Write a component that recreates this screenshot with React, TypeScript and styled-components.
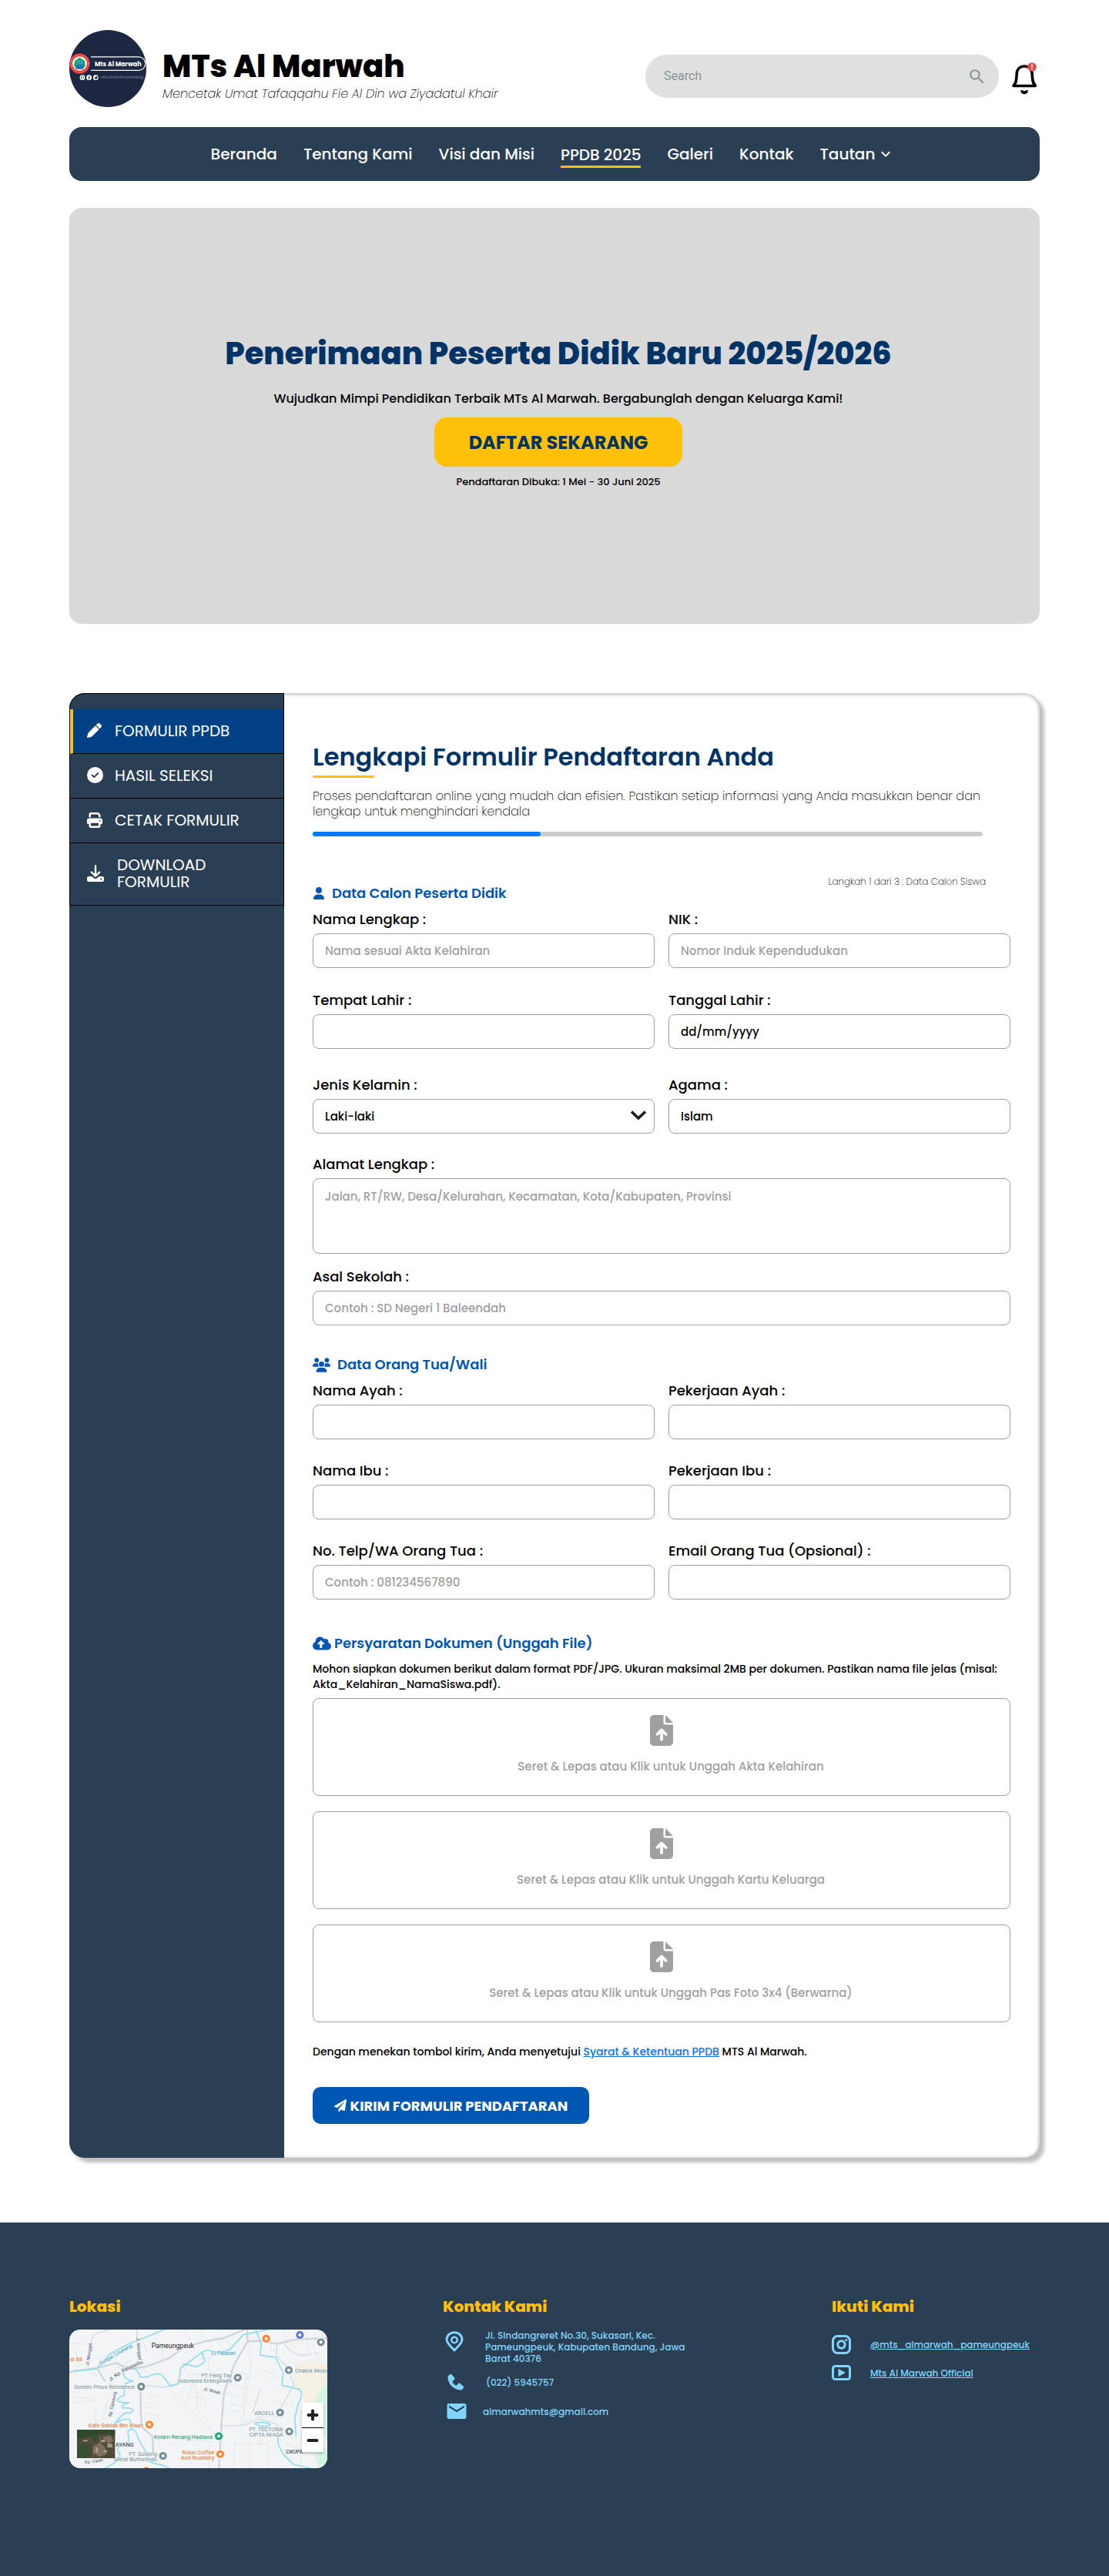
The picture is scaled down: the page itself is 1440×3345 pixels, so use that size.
import React from "react";
import styled, { createGlobalStyle, css } from "styled-components";
import { FaPen, FaCircleCheck, FaPrint, FaUser, FaUsers, FaFileArrowUp } from "react-icons/fa6";
import { FaCloudUploadAlt, FaPaperPlane } from "react-icons/fa";
import { MdSearch, MdEmail, MdKeyboardArrowDown } from "react-icons/md";
import { BiSolidPhone } from "react-icons/bi";

const color = {
  navy: "#2b3f54",
  ink: "#003366",
  blue: "#0056b3",
  active: "#004085",
  bright: "#007bff",
  link: "#0d6efd",
  gold: "#ffc107",
  line: "#a0a0a0",
  sky: "#81d4fa",
};

const thin = `"Poppins ExtraLight", Poppins, Inter, sans-serif`;

const GlobalStyle = createGlobalStyle`
  *, *::before, *::after { box-sizing: border-box; }
  body { margin: 0; background: #fff; color: #000; }
  body, button, input, select, textarea { font-family: Poppins, Inter, "Open Sans", sans-serif; }
  h1, h2, h3, p, ul { margin: 0; padding: 0; }
  ul { list-style: none; }
  svg { display: block; flex: none; }
`;

const Page = styled.div`
  display: flex;
  flex-direction: column;
`;

const Wrap = styled.div`
  padding: 0 90px;
`;

/* ---------- header ---------- */

const Header = styled.header`
  display: flex;
  align-items: center;
  padding-top: 39px;
`;

const Brand = styled.div`
  margin-left: 21px;
  padding-top: 16px;
`;

const BrandName = styled.h1`
  font-size: 40px;
  line-height: 50px;
  font-weight: 800;
`;

const Motto = styled.p`
  font-family: ${thin};
  font-size: 16px;
  line-height: 22px;
  font-weight: 275;
  font-style: italic;
`;

const SearchBox = styled.form`
  display: flex;
  align-items: center;
  width: 459px;
  height: 56px;
  margin-left: auto;
  margin-top: 20px;
  padding: 0 16px 0 24px;
  border-radius: 28px;
  background: #e0e0e0;
`;

const SearchInput = styled.input`
  flex: 1;
  min-width: 0;
  padding: 0;
  border: 0;
  outline: 0;
  background: none;
  font: 400 16px/24px Roboto, sans-serif;
  &::placeholder { color: #879592; opacity: 1; }
`;

const IconButton = styled.button`
  display: flex;
  padding: 0;
  border: 0;
  background: none;
  color: #879592;
  cursor: pointer;
`;

const BellButton = styled(IconButton)`
  margin: 26px 3px 0 16px;
`;

/* ---------- navigation ---------- */

const Nav = styled.nav`
  display: flex;
  justify-content: center;
  align-items: center;
  gap: 34px;
  height: 70px;
  margin-top: 26px;
  padding-right: 4px;
  border-radius: 16px;
  background: ${color.navy};
`;

const NavLink = styled.a<{ $active?: boolean }>`
  display: flex;
  align-items: center;
  gap: 2px;
  color: #fff;
  font-size: 20px;
  line-height: 28px;
  font-weight: 500;
  text-decoration: none;
  ${(p) => p.$active && css`
    border-bottom: 3px solid ${color.gold};
    margin-top: 5px;
  `}
`;

/* ---------- hero ---------- */

const Hero = styled.section`
  display: flex;
  flex-direction: column;
  align-items: center;
  height: 540px;
  margin-top: 35px;
  padding: 161px 0 0 10px;
  border-radius: 16px;
  background: #d9d9d9;
  text-align: center;
`;

const HeroTitle = styled.h2`
  color: ${color.ink};
  font-size: 40px;
  line-height: 56px;
  font-weight: 800;
`;

const HeroText = styled.p`
  margin-top: 19px;
  font-size: 16px;
  line-height: 24px;
  font-weight: 500;
`;

const HeroButton = styled.button`
  width: 322px;
  height: 64px;
  margin-top: 12px;
  border: 0;
  border-radius: 16px;
  background: ${color.gold};
  color: ${color.ink};
  font-size: 24px;
  font-weight: 700;
  cursor: pointer;
`;

const HeroNote = styled.p`
  margin-top: 10px;
  font-size: 13px;
  line-height: 20px;
  font-weight: 500;
`;

/* ---------- form card ---------- */

const Card = styled.section`
  display: flex;
  margin-top: 90px;
  border-radius: 20px;
  background: #fff;
  box-shadow: 6px 6px 4px rgba(0, 0, 0, 0.25), inset 0 1px 4px 1px rgba(0, 0, 0, 0.25);
`;

const Sidebar = styled.aside`
  width: 279px;
  flex: none;
  border-radius: 20px 0 0 20px;
  background: ${color.navy};
`;

const SideList = styled.ul`
  padding-top: 20px;
  border: 1px solid #000;
  border-radius: 20px 0 0 0;
`;

const SideLink = styled.a<{ $active?: boolean }>`
  display: flex;
  align-items: center;
  gap: 15px;
  min-height: 58px;
  padding: 5px 20px 7px 22px;
  border-bottom: 1px solid #000;
  color: #fff;
  font-size: 20px;
  line-height: 22px;
  font-weight: 400;
  text-decoration: none;
  ${(p) => p.$active && css`
    border-left: 4px solid ${color.gold};
    padding-left: 18px;
    background: ${color.active};
  `}
  li:last-child > & {
    min-height: 80px;
    border-bottom: 0;
    padding-right: 60px;
    gap: 18px;
  }
`;

const SideIcon = styled.span`
  display: flex;
  min-width: 21px;
`;

const Form = styled.form`
  flex: 1;
  min-width: 0;
  padding: 62px 38px 44px 37px;
`;

const FormTitle = styled.h2`
  color: ${color.ink};
  font-size: 32px;
  line-height: 42px;
  font-weight: 600;
  &::after {
    content: "";
    display: block;
    width: 80px;
    height: 3px;
    margin-top: 3px;
    border-radius: 2px;
    background: ${color.gold};
  }
`;

const Intro = styled.p`
  max-width: 880px;
  margin-top: 14px;
  font-family: ${thin};
  font-size: 16px;
  line-height: 20px;
  font-weight: 275;
`;

const Progress = styled.div`
  height: 6px;
  margin: 16px 36px 0 0;
  border-radius: 3px;
  background: #ccc;
`;

const ProgressFill = styled.div`
  height: 100%;
  border-radius: 3px;
  background: ${color.bright};
`;

const Step = styled.p`
  margin: 50px 32px 0 0;
  font-family: ${thin};
  font-size: 12px;
  line-height: 18px;
  font-weight: 275;
  text-align: right;
`;

const SectionTitle = styled.h3<{ $gap: number; $top: number }>`
  display: flex;
  align-items: center;
  gap: ${(p) => p.$gap}px;
  margin-top: ${(p) => p.$top}px;
  color: ${color.blue};
  font-size: 18px;
  line-height: 24px;
  font-weight: 600;
`;

const Row = styled.div<{ $top: number }>`
  display: grid;
  grid-auto-flow: column;
  grid-auto-columns: minmax(0, 1fr);
  gap: 18px;
  margin-top: ${(p) => p.$top}px;
`;

const FieldBox = styled.div`
  display: flex;
  flex-direction: column;
  gap: 6px;
`;

const Label = styled.label`
  font-size: 18px;
  line-height: 24px;
  font-weight: 500;
`;

const control = css`
  width: 100%;
  border: 1px solid ${color.line};
  border-radius: 8px;
  background: #fff;
  color: #000;
  font-size: 15px;
  line-height: 22px;
  font-weight: 500;
  outline-color: ${color.bright};
`;

const Input = styled.input<{ $dark?: boolean }>`
  ${control}
  height: 45px;
  padding: 0 15px;
  &::placeholder { color: ${(p) => (p.$dark ? "#000" : color.line)}; opacity: 1; }
`;

const TextArea = styled.textarea`
  ${control}
  display: block;
  height: 98px;
  padding: 12px 15px;
  resize: none;
  &::placeholder { color: ${color.line}; opacity: 1; }
`;

const SelectBox = styled.div`
  position: relative;
  & > svg {
    position: absolute;
    right: 10px;
    top: 14px;
    pointer-events: none;
  }
`;

const Select = styled.select`
  ${control}
  display: block;
  height: 45px;
  padding: 0 15px;
  appearance: none;
`;

const Hint = styled.p`
  margin-top: 11px;
  font-size: 14px;
  line-height: 20px;
  font-weight: 500;
`;

const Uploads = styled.div`
  display: flex;
  flex-direction: column;
  gap: 20px;
  margin-top: 8px;
`;

const Drop = styled.label`
  display: flex;
  flex-direction: column;
  align-items: center;
  gap: 15px;
  height: 127px;
  padding-top: 21px;
  border: 1px solid ${color.line};
  border-radius: 8px;
  color: ${color.line};
  font-size: 15px;
  line-height: 24px;
  font-weight: 500;
  cursor: pointer;
`;

const DropText = styled.span`
  padding-left: 24px;
`;

const FileInput = styled.input`
  display: none;
`;

const Terms = styled.p`
  margin-top: 28px;
  font-size: 14px;
  line-height: 20px;
  font-weight: 500;
`;

const TermsLink = styled.a`
  color: ${color.link};
`;

const Submit = styled.button`
  display: flex;
  align-items: center;
  justify-content: center;
  gap: 5px;
  width: 359px;
  height: 48px;
  margin-top: 36px;
  border: 0;
  border-radius: 10px;
  background: ${color.blue};
  color: #fff;
  font-size: 18px;
  font-weight: 700;
  cursor: pointer;
`;

/* ---------- footer ---------- */

const Footer = styled.footer`
  display: grid;
  grid-template-columns: minmax(0, 485fr) minmax(0, 505fr) minmax(0, 270fr);
  margin-top: 84px;
  padding: 94px 90px 140px;
  background: ${color.navy};
`;

const FootTitle = styled.h3`
  color: ${color.gold};
  font-size: 20px;
  line-height: 30px;
  font-weight: 800;
`;

const MapFrame = styled.div`
  position: relative;
  width: 335px;
  height: 180px;
  margin-top: 15px;
  border-radius: 14px;
  overflow: hidden;
`;

const ZoomControl = styled.div`
  position: absolute;
  right: 5px;
  bottom: 21px;
  width: 28px;
  background: #fff;
  box-shadow: 0 2px 3px rgba(0, 0, 0, 0.25);
`;

const ZoomButton = styled.button`
  display: flex;
  align-items: center;
  justify-content: center;
  width: 28px;
  height: 32px;
  padding: 0;
  border: 0;
  background: none;
  cursor: pointer;
  & + & { border-top: 1px solid #000; }
`;

const ContactList = styled.ul<{ $gap: number; $top: number; $inset?: boolean }>`
  display: flex;
  flex-direction: column;
  gap: ${(p) => p.$gap}px;
  margin-top: ${(p) => p.$top}px;
  padding-left: ${(p) => (p.$inset ? 3 : 0)}px;
`;

const Contact = styled.li<{ $gap: number; $top?: boolean }>`
  display: flex;
  align-items: ${(p) => (p.$top ? "flex-start" : "center")};
  gap: ${(p) => p.$gap}px;
  color: ${color.sky};
  font-size: 12px;
  line-height: 15px;
  font-weight: 500;
`;

const Address = styled.span`
  max-width: 270px;
`;

const SocialLink = styled.a`
  color: ${color.sky};
`;

/* ---------- drawings ---------- */

const Logo = () => (
  <svg width="100" height="100" viewBox="0 0 100 100" aria-label="Logo MTs Al Marwah">
    <clipPath id="logo-clip"><circle cx="50" cy="50" r="50" /></clipPath>
    <g clipPath="url(#logo-clip)">
      <rect width="100" height="100" fill="#1c2742" />
      <path d="M28 34.8H90a8.8 8.8 0 0 1 0 17.6H28" fill="none" stroke="#fff" strokeWidth="1.2" />
      <circle cx="13.5" cy="43.5" r="13.3" fill="#e0262c" />
      <circle cx="13.5" cy="43.5" r="11.3" fill="none" stroke="#fff" strokeWidth="1.2" strokeDasharray="1 1.4" />
      <circle cx="13.5" cy="43.5" r="9.6" fill="#fff" />
      <path d="M13.5 35.5l6.5 4.5 1 6-3 5h-9l-3-5 1-6z" fill="#27a644" />
      <path d="M13.5 37.5l3.5 4v8h-7v-8z" fill="#2b9be0" />
      <path d="M9.5 45h8v5h-8z" fill="#1676c4" />
      <text x="33" y="46.500" fontSize="8" fontWeight="700" fill="#fff" fontFamily="Poppins, Inter, sans-serif">Mts Al Marwah</text>
      {[17, 25.6, 34.3].map((x) => <circle key={x} cx={x} cy="61.7" r="3.4" fill="#fff" />)}
      <rect x="15.4" y="60.1" width="3.2" height="3.2" rx="1" fill="none" stroke="#1c2742" strokeWidth=".7" />
      <path d="M26.8 60h-.6q-.6 0-.6.7v3.8M24.5 61.7h2.2" fill="none" stroke="#1c2742" strokeWidth=".9" />
      <path d="M32.6 60.4q.8 1 1.8.9 0-1.4 1.3-1.2l1 .4q0 2.8-2 3.2-1.200.2-2.100-.4.8 0 1.100-.4-1.200-.6-1.100-2.500z" fill="#1c2742" />
      <text x="40" y="63.300" fontSize="4.600" fontStyle="italic" fontWeight="300" fill="#9aa3b5" fontFamily="Poppins, Inter, sans-serif">officialmtsalmarwahbdg</text>
    </g>
  </svg>
);

const Bell = () => (
  <svg width="34" height="42" viewBox="0 0 34 42">
    <path d="M3 30.500h28.500c-2.800-3-3.600-5.500-3.900-9.500l-.5-6.500C26.700 8.700 22.800 5 17.200 5S7.600 8.700 7.200 14.500L6.800 21c-.3 4-1 6.500-3.800 9.500z" fill="none" stroke="#000" strokeWidth="3.600" strokeLinejoin="round" />
    <path d="M12 36.500q1.500-1 3 0 2 1.500 4 0 1.500-1 3 0-.8 4.700-5 4.700t-5-4.700z" fill="#000" />
    <circle cx="27" cy="6" r="5.800" fill="#ef4444" />
    <path d="M27 2.500v4.300" stroke="#fff" strokeWidth="1.500" strokeLinecap="round" />
    <circle cx="27" cy="9" r=".9" fill="#fff" />
  </svg>
);

const Download = () => (
  <svg width="22" height="22" viewBox="0 0 22 22" fill="none">
    <path d="M11 1.200V14M5.800 9.500L11 14.700l5.200-5.200" stroke="#fff" strokeWidth="2.400" strokeLinecap="round" strokeLinejoin="round" />
    <path fillRule="evenodd" d="M2.200 15h4l3 2.600q1.800 1.400 3.600 0l3-2.600h4q2.200 0 2.200 2.200v2.600q0 2.200-2.200 2.200H2.200Q0 22 0 19.800v-2.600Q0 15 2.200 15zm15.900 2.500a1 1 0 1 0 .1 0z" fill="#fff" />
  </svg>
);

const Chevron = () => (
  <svg width="22" height="14" viewBox="0 0 22 14" fill="none">
    <path d="M2 2.500l9 8.500 9-8.500" stroke="#1d1d1d" strokeWidth="3.600" />
  </svg>
);

const Pin = () => (
  <svg width="25" height="29" viewBox="0 -3 25 29" fill="none" stroke={color.sky}>
    <path d="M12 24C7 18.500 2 14.500 2 10a10 9.300 0 0 1 20 0C22 14.500 17 18.500 12 24z" strokeWidth="3" strokeLinejoin="round" />
    <circle cx="12" cy="10.500" r="3.800" strokeWidth="2.600" />
  </svg>
);

const Instagram = () => (
  <svg width="25" height="25" viewBox="0 0 25 25" fill="none" stroke={color.sky} strokeWidth="3">
    <rect x="1.500" y="1.500" width="22" height="22" rx="6" />
    <circle cx="12.500" cy="12.500" r="4.700" />
    <circle cx="18.800" cy="6.500" r="1.600" fill={color.sky} stroke="none" />
  </svg>
);

const Youtube = () => (
  <svg width="25" height="20" viewBox="0 0 25 20">
    <rect x="1.500" y="1.500" width="22" height="17" rx="3" fill="none" stroke={color.sky} strokeWidth="3" />
    <path d="M9 5.500l8 4.500-8 4.500z" fill={color.sky} stroke={color.sky} strokeLinejoin="round" />
  </svg>
);

const pins: [number, number, string][] = [
  [337, 417, "#78909c"], [713, 382, "#78909c"], [912, 353, "#78909c"], [1037, 244, "#78909c"],
  [878, 518, "#78909c"], [914, 592, "#78909c"], [422, 687, "#78909c"], [639, 610, "#1fa874"],
  [369, 565, "#ff8533"], [645, 680, "#ff8533"], [824, 230, "#ff8533"], [955, 216, "#6878d6"], [357, 745, "#ff8533"],
];

const labels: { x: number; y: number; t: string; c: string; s?: number; a?: "start" | "middle" | "end"; r?: number; w?: number }[] = [
  { x: 377, y: 266, t: "Pameungpeuk", c: "#202124", s: 26 },
  { x: 60, y: 318, t: "al 88", c: "#e2712b" },
  { x: 178, y: 334, t: "Sungai Ciherang", c: "#2f9fb5", r: -30, s: 20 },
  { x: 133, y: 336, t: "Jl. Manggel", c: "#3c5068", r: -82, s: 17 },
  { x: 318, y: 226, t: "Jl. Manggel", c: "#3c5068", r: 84, s: 17 },
  { x: 217, y: 398, t: "Jl. Kp.", c: "#3c5068", r: -38, s: 20 },
  { x: 264, y: 362, t: "Kalapatilu", c: "#3c5068", r: -24, s: 20 },
  { x: 610, y: 294, t: "Ci Palasari", c: "#2f9fb5", s: 20 },
  { x: 690, y: 381, t: "PT Feng Tay", c: "#78909c", a: "end" },
  { x: 690, y: 403, t: "Indonesia Enterprises", c: "#78909c", a: "end" },
  { x: 578, y: 432, t: "Jl. Waas", c: "#3c5068", r: 12, s: 18 },
  { x: 312, y: 427, t: "Golden Pinus Residence", c: "#78909c", a: "end" },
  { x: 936, y: 363, t: "Chakra Moto", c: "#78909c" },
  { x: 856, y: 528, t: "ARCELL", c: "#78909c", a: "end" },
  { x: 890, y: 591, t: "PT. TECTONA", c: "#78909c", a: "end" },
  { x: 890, y: 613, t: "CIPTA NIAGA", c: "#78909c", a: "end" },
  { x: 220, y: 535, t: "Kp. Cipasung", c: "#3c5068", r: -78, s: 17 },
  { x: 345, y: 576, t: "Kafe Seblak Btn Waas", c: "#e2712b", a: "end" },
  { x: 615, y: 621, t: "Kolam Renang Hadiana", c: "#16946a", a: "end" },
  { x: 622, y: 680, t: "Rolun Coffee", c: "#e2712b", a: "end" },
  { x: 622, y: 701, t: "And Roastery", c: "#e2712b", a: "end" },
  { x: 308, y: 650, t: "AYANG", c: "#4a5560", a: "end", s: 22, w: 500 },
  { x: 399, y: 687, t: "PT. Sudong", c: "#78909c", a: "end" },
  { x: 399, y: 709, t: "Metal Buttonindo", c: "#78909c", a: "end" },
  { x: 900, y: 679, t: "CIKUPA", c: "#4a5560", s: 19, w: 500 },
  { x: 118, y: 718, t: "Kp. Cipas", c: "#3c5068", r: -8, s: 17 },
];

const MapArt = () => (
  <svg width="100%" height="100%" viewBox="57 195 1005 540" preserveAspectRatio="xMidYMid slice" aria-label="Peta lokasi">
    <rect x="57" y="195" width="1005" height="540" fill="#f3f4f5" />
    <path d="M932 325Q1000 310 1062 325V410L1010 480H975L965 440 935 425z" fill="#f5f0e4" />
    <path d="M1062 400Q1010 460 1015 500L1040 560 1062 640zM1062 655Q1020 660 1015 690L1030 735H1062z" fill="#d3f5e1" />
    <g fill="none" stroke="#dde3e9" strokeWidth="2.500">
      <path d="M445 425L635 612M500 340l55 90v70M520 370h130M540 400l-20 60h60l10 30M600 290v60l40 20M560 310l60-10M690 360l60 10-20 120M770 300l-30 200-10 60M700 400l70-20M660 440l60 20M400 500h-50M370 460l40-10M345 520l60 10M700 735V640h130v95M760 640v95M800 600v40M860 560l40 30M850 470l60 20M920 480l40 60-40 80M900 640l60 20v75M800 350l60 20M820 400l50-20M740 570v-20l60-15h70M600 640v95M570 690h80M480 620l160 15M380 620l40 40M440 640l50 10M60 250h60M75 460h80M70 480l90-10M100 330l-20-50M160 300l40 30M240 350l60-40M360 280l-20-50M420 260v60M450 300v-50M500 200l30 40M560 200l30 30M620 220l30 40M640 210l60 60M830 210l10 40M890 200l20 50M980 210l10 60M1000 240l30 80M840 260l60 80M990 280l40 10M680 480l60 20M670 520l50-10M660 400l90 30M760 250v60M330 340l60 40M300 400l50 60M200 400l60 20M160 500v100M210 460l-20 80M130 350l40 30" />
    </g>
    <g fill="none" stroke="#cdd6de" strokeWidth="7" strokeLinejoin="round" strokeLinecap="round">
      <path d="M57 360L165 345 240 325 290 350 360 338 410 320 450 305 500 265 590 240 660 228 740 195M750 195L752 240 700 330 660 440 650 560 640 735M752 240L800 240 870 250 930 235 1062 228M165 345l30 50M335 425v90l5 60 40 35 5 70" />
    </g>
    <g fill="none" stroke="#d3dbe2" strokeWidth="4">
      <path d="M210 195l-60 20-20 80v50M320 195v50M340 412l85 8 75-20M650 572l90-5 60-25 60 20 30 40M912 360l20 50-40 70-20 40M800 430l-30 90M865 250v50l40 40M895 250q40 60 105 40" />
    </g>
    <g fill="none" stroke="#93dcf2" strokeWidth="5" strokeLinejoin="round" strokeLinecap="round">
      <path d="M75 355Q140 355 165 345L215 290 290 250 380 215 425 195M305 345Q325 350 333 380L360 380Q410 355 425 380L450 415 485 405 490 345 580 280Q600 270 625 285L680 275 735 215 830 195M575 285l10 35-30 20-55-12M785 200l20 50-5 45 60 8 30 60-5 50 70 15Q970 450 950 480L935 540 940 610M270 350q-10 40 35 45l-30 10-5 45q-60 30 20 30-35 10-25 20 60 0 30 20-30-10-65 50M235 560q60-30 60-5 20 20-10 35l5 40q-60 20-40 45t-55 60M285 590q30-20 40 30l35 60 5 30 60 15 20 10M780 560q40-10 60 5-20 15-60-2zM870 590v50l20 40 40 40 65 15" />
    </g>
    {labels.map((l, i) => (
      <text key={i} x={l.x} y={l.y} fill={l.c} fontSize={l.s ?? 22} fontWeight={l.w ?? 400} textAnchor={l.a ?? "start"}
        fontFamily="Roboto, sans-serif" stroke="#f3f4f5" strokeWidth="3" paintOrder="stroke"
        transform={l.r ? `rotate(${l.r} ${l.x} ${l.y})` : undefined}>{l.t}</text>
    ))}
    {pins.map(([x, y, fill], i) => (
      <g key={i}>
        <path d={`M${x} ${y + 22}l-9-9h18z`} fill="#fff" />
        <circle cx={x} cy={y} r="18" fill="#fff" />
        <circle cx={x} cy={y} r="15.500" fill={fill} />
        <circle cx={x} cy={y} r="6" fill="#fff" />
      </g>
    ))}
    <g>
      <rect x="87" y="585" width="148" height="111" fill="#4d4a38" />
      <path d="M87 585h148v22l-40-8-50 12-58 8z" fill="#2f4a2a" />
      <path d="M87 650l30-10 20 20-10 36H87zM150 600l20 20-25 10z" fill="#35502f" />
      <path d="M150 650l25-15 20 15 8 30-30 10-25-15zM185 615l30-8 15 20-20 15z" fill="#7d6f5c" />
      <path d="M180 625h16v9h-16zM205 640h20v14h-20zM160 655h9v20h-9zM110 625h18v6h-18zM190 665h14v8h-14z" fill="#a99b88" />
      <path d="M130 615l30 35-12 46M175 608l10 80M200 630l35 30" stroke="#8a7c68" strokeWidth="2" fill="none" />
    </g>
  </svg>
);

const ZoomSign = ({ plus }: { plus?: boolean }) => (
  <svg width="16" height="16" viewBox="0 0 16 16" stroke="#222" strokeWidth="4" strokeLinecap="round">
    <path d={plus ? "M2.500 8h11M8 2.500v11" : "M2.500 8h11"} />
  </svg>
);

/* ---------- pieces ---------- */

type FieldProps = { id: string; label: string; children?: React.ReactNode; placeholder?: string; value?: string; dark?: boolean; type?: string };

const Field = ({ id, label, children, placeholder, value, dark, type = "text" }: FieldProps) => (
  <FieldBox>
    <Label htmlFor={id}>{label} :</Label>
    {children ?? <Input id={id} type={type} placeholder={placeholder} defaultValue={value} $dark={dark} />}
  </FieldBox>
);

const navItems = ["Beranda", "Tentang Kami", "Visi dan Misi", "PPDB 2025", "Galeri", "Kontak", "Tautan"];

const sideItems = [
  { text: "FORMULIR PPDB", icon: <FaPen size={19} /> },
  { text: "HASIL SELEKSI", icon: <FaCircleCheck size={21} /> },
  { text: "CETAK FORMULIR", icon: <FaPrint size={20} /> },
  { text: "DOWNLOAD FORMULIR", icon: <Download /> },
];

const documents = ["Akta Kelahiran", "Kartu Keluarga", "Pas Foto 3x4 (Berwarna)"];

export default function App() {
  return (
    <Page>
      <GlobalStyle />
      <Wrap>
        <Header>
          <Logo />
          <Brand>
            <BrandName>MTs Al Marwah</BrandName>
            <Motto>Mencetak Umat Tafaqqahu Fie Al Din wa Ziyadatul Khair</Motto>
          </Brand>
          <SearchBox role="search">
            <SearchInput type="search" placeholder="Search" aria-label="Search" />
            <IconButton type="submit" aria-label="Cari"><MdSearch size={25} /></IconButton>
          </SearchBox>
          <BellButton type="button" aria-label="Notifikasi"><Bell /></BellButton>
        </Header>

        <Nav>
          {navItems.map((item) => (
            <NavLink key={item} href="#" $active={item === "PPDB 2025"}>
              {item}
              {item === "Tautan" && <MdKeyboardArrowDown size={24} />}
            </NavLink>
          ))}
        </Nav>

        <Hero>
          <HeroTitle>Penerimaan Peserta Didik Baru 2025/2026</HeroTitle>
          <HeroText>Wujudkan Mimpi Pendidikan Terbaik MTs Al Marwah. Bergabunglah dengan Keluarga Kami!</HeroText>
          <HeroButton type="button">DAFTAR SEKARANG</HeroButton>
          <HeroNote>Pendaftaran Dibuka: 1 Mei - 30 Juni 2025</HeroNote>
        </Hero>

        <Card>
          <Sidebar>
            <SideList>
              {sideItems.map((item, i) => (
                <li key={item.text}>
                  <SideLink href="#" $active={i === 0}>
                    <SideIcon>{item.icon}</SideIcon>
                    {item.text}
                  </SideLink>
                </li>
              ))}
            </SideList>
          </Sidebar>

          <Form>
            <FormTitle>Lengkapi Formulir Pendaftaran Anda</FormTitle>
            <Intro>
              Proses pendaftaran online yang mudah dan efisien. Pastikan setiap informasi yang Anda masukkan benar dan
              lengkap untuk menghindari kendala
            </Intro>
            <Progress><ProgressFill style={{ width: `${(1 / 3) * 102}%` }} /></Progress>
            <Step>Langkah 1 dari 3 : Data Calon Siswa</Step>

            <SectionTitle $gap={9} $top={-6}><FaUser size={16} />Data Calon Peserta Didik</SectionTitle>
            <Row $top={10}>
              <Field id="nama" label="Nama Lengkap" placeholder="Nama sesuai Akta Kelahiran" />
              <Field id="nik" label="NIK" placeholder="Nomor Induk Kependudukan" />
            </Row>
            <Row $top={30}>
              <Field id="tempat" label="Tempat Lahir" />
              <Field id="tanggal" label="Tanggal Lahir" placeholder="dd/mm/yyyy" dark />
            </Row>
            <Row $top={35}>
              <Field id="kelamin" label="Jenis Kelamin">
                <SelectBox>
                  <Select id="kelamin" defaultValue="Laki-laki">
                    <option>Laki-laki</option>
                    <option>Perempuan</option>
                  </Select>
                  <Chevron />
                </SelectBox>
              </Field>
              <Field id="agama" label="Agama" value="Islam" />
            </Row>
            <Row $top={28}>
              <Field id="alamat" label="Alamat Lengkap">
                <TextArea id="alamat" placeholder="Jalan, RT/RW, Desa/Kelurahan, Kecamatan, Kota/Kabupaten, Provinsi" />
              </Field>
            </Row>
            <Row $top={18}>
              <Field id="sekolah" label="Asal Sekolah" placeholder="Contoh : SD Negeri 1 Baleendah" />
            </Row>

            <SectionTitle $gap={9} $top={39}><FaUsers size={23} />Data Orang Tua/Wali</SectionTitle>
            <Row $top={10}>
              <Field id="ayah" label="Nama Ayah" />
              <Field id="kerja-ayah" label="Pekerjaan Ayah" />
            </Row>
            <Row $top={29}>
              <Field id="ibu" label="Nama Ibu" />
              <Field id="kerja-ibu" label="Pekerjaan Ibu" />
            </Row>
            <Row $top={29}>
              <Field id="telp" label="No. Telp/WA Orang Tua" placeholder="Contoh : 081234567890" type="tel" />
              <Field id="email" label="Email Orang Tua (Opsional)" type="email" />
            </Row>

            <SectionTitle $gap={4} $top={45}><FaCloudUploadAlt size={24} />Persyaratan Dokumen (Unggah File)</SectionTitle>
            <Hint>
              Mohon siapkan dokumen berikut dalam format PDF/JPG. Ukuran maksimal 2MB per dokumen. Pastikan nama file jelas (misal: Akta_Kelahiran_NamaSiswa.pdf).
            </Hint>
            <Uploads>
              {documents.map((name) => (
                <Drop key={name}>
                  <FaFileArrowUp size={40} />
                  <DropText>Seret &amp; Lepas atau Klik untuk Unggah {name}</DropText>
                  <FileInput type="file" />
                </Drop>
              ))}
            </Uploads>

            <Terms>
              Dengan menekan tombol kirim, Anda menyetujui <TermsLink href="#">Syarat &amp; Ketentuan PPDB</TermsLink> MTS Al Marwah.
            </Terms>
            <Submit type="submit"><FaPaperPlane size={16} />KIRIM FORMULIR PENDAFTARAN</Submit>
          </Form>
        </Card>
      </Wrap>

      <Footer>
        <div>
          <FootTitle>Lokasi</FootTitle>
          <MapFrame>
            <MapArt />
            <ZoomControl>
              <ZoomButton type="button" aria-label="Perbesar"><ZoomSign plus /></ZoomButton>
              <ZoomButton type="button" aria-label="Perkecil"><ZoomSign /></ZoomButton>
            </ZoomControl>
          </MapFrame>
        </div>
        <div>
          <FootTitle>Kontak Kami</FootTitle>
          <ContactList $gap={9} $top={15} $inset>
            <Contact $gap={27} $top>
              <Pin />
              <Address>Jl. Sindangreret No.30, Sukasari, Kec. Pameungpeuk, Kabupaten Bandung, Jawa Barat 40376</Address>
            </Contact>
            <Contact $gap={25}><BiSolidPhone size={28} />(022) 5945757</Contact>
            <Contact $gap={19}><MdEmail size={30} />almarwahmts@gmail.com</Contact>
          </ContactList>
        </div>
        <div>
          <FootTitle>Ikuti Kami</FootTitle>
          <ContactList $gap={14} $top={22}>
            <Contact $gap={25}><Instagram /><SocialLink href="#">@mts_almarwah_pameungpeuk</SocialLink></Contact>
            <Contact $gap={25}><Youtube /><SocialLink href="#">Mts Al Marwah Official</SocialLink></Contact>
          </ContactList>
        </div>
      </Footer>
    </Page>
  );
}
